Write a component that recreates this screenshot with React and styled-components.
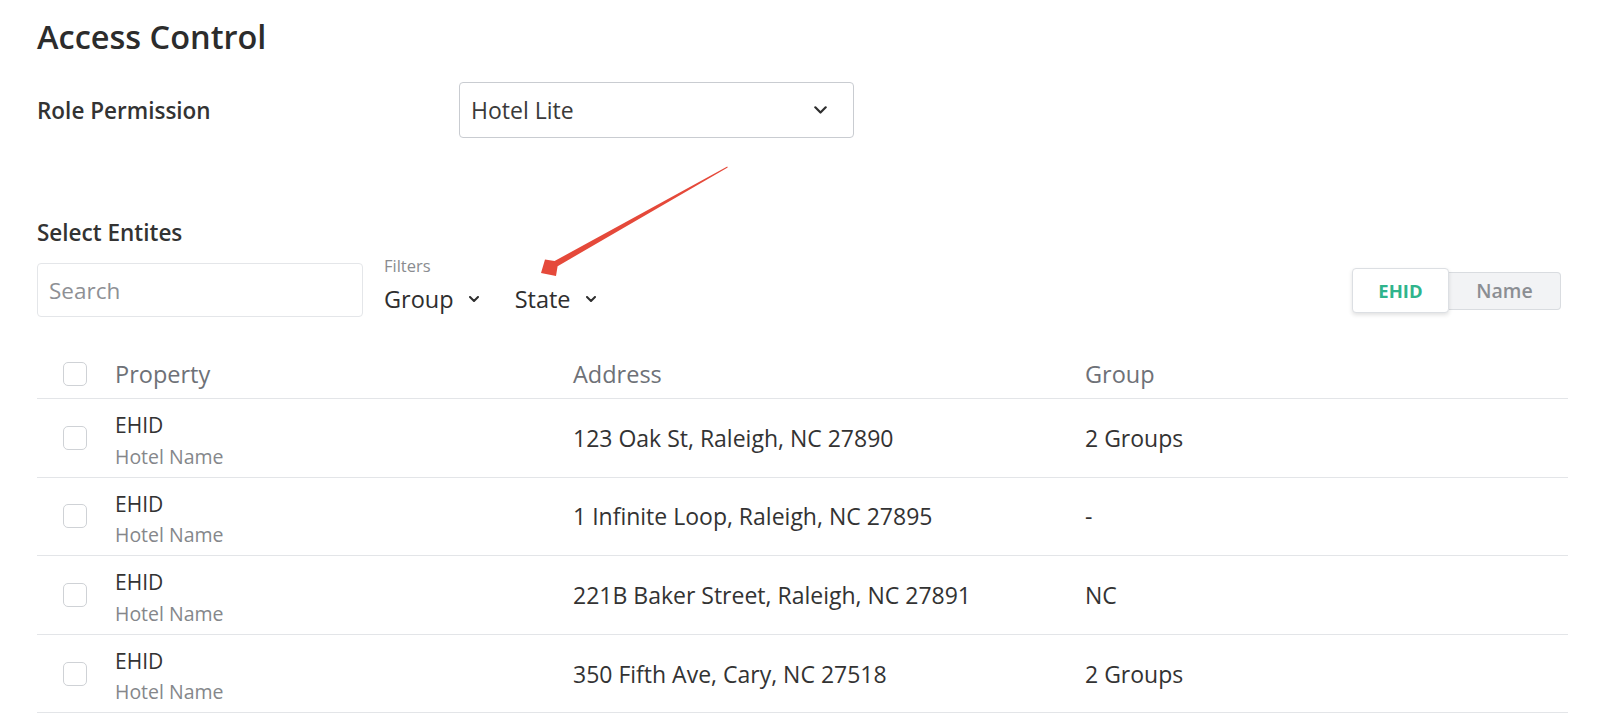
import React from 'react';
import styled, {createGlobalStyle} from 'styled-components';

const GlobalStyle = createGlobalStyle`
    body {
        margin: 0;
        background: #ffffff;
        font-family: "Open Sans", "Noto Sans", sans-serif;
        color: #333333;
    }
`;

const Page = styled.div`
    position: relative;
    padding: 17px 32px 0 37px;
`;

const Title = styled.h1`
    margin: 0;
    font-size: 32.5px;
    line-height: 40px;
    font-weight: 600;
    color: #2c2c2c;
`;

const RoleRow = styled.div`
    display: flex;
    align-items: center;
    margin-top: 25px;
`;

const FieldLabel = styled.div`
    width: 422px;
    font-size: 22.5px;
    font-weight: 600;
    color: #333333;
`;

const SelectBox = styled.div`
    box-sizing: border-box;
    width: 395px;
    height: 56px;
    display: flex;
    align-items: center;
    justify-content: space-between;
    padding: 0 26px 0 11px;
    border: 1px solid #c9ccd1;
    border-radius: 4px;
    font-size: 23px;
    color: #3a3a3a;
`;

const SectionLabel = styled.div`
    margin-top: 81px;
    font-size: 22.5px;
    line-height: 28px;
    font-weight: 600;
    color: #333333;
`;

const Toolbar = styled.div`
    display: flex;
    align-items: flex-start;
    margin-top: 9px;
`;

const SearchInput = styled.input`
    box-sizing: border-box;
    width: 326px;
    height: 54px;
    margin-top: 7px;
    padding: 0 11px;
    border: 1px solid #e4e6e9;
    border-radius: 4px;
    font-family: inherit;
    font-size: 22.5px;
    color: #333333;
    outline: none;

    &::placeholder {
        color: #8e9095;
    }
`;

const FilterGroup = styled.div`
    display: flex;
    flex-direction: column;
    margin-left: 21px;
`;

const FilterCaption = styled.div`
    font-size: 16.5px;
    line-height: 20px;
    color: #8a8c90;
`;

const FilterList = styled.div`
    display: flex;
    gap: 36px;
    margin-top: 7.5px;
`;

const FilterButton = styled.div`
    display: flex;
    align-items: center;
    gap: 15px;
    font-size: 23.5px;
    line-height: 30px;
    font-weight: 500;
    color: #2e2e2e;
`;

const Segmented = styled.div`
    display: flex;
    align-items: center;
    margin: 12px 7px 0 auto;
`;

const Segment = styled.div`
    box-sizing: border-box;
    display: flex;
    align-items: center;
    justify-content: center;
    width: ${p => p.$active ? '97px' : '112px'};
    height: ${p => p.$active ? '45px' : '38px'};
    font-size: ${p => p.$active ? '18.5px' : '19.5px'};
    font-weight: ${p => p.$active ? 700 : 600};
    color: ${p => p.$active ? '#2fb48c' : '#8b8e93'};
    background: ${p => p.$active ? '#ffffff' : '#f2f3f5'};
    border: 1px solid ${p => p.$active ? '#dcdfe3' : '#d9dce0'};
    border-radius: 4px;
    box-shadow: ${p => p.$active ? '0 2px 4px rgba(0, 0, 0, 0.12)' : 'none'};
    ${p => p.$active ? 'position: relative; z-index: 1;' : 'border-left: none; border-radius: 0 4px 4px 0;'}
`;

const Table = styled.div`
    margin-top: 32px;
`;

const Row = styled.div`
    display: grid;
    grid-template-columns: 78px 458px 512px 1fr;
    align-items: center;
    height: ${p => p.$head ? '49px' : '77.6px'};
    border-bottom: 1px solid #e3e5e8;
`;

const CheckCell = styled.div`
    display: flex;
    padding-left: 26px;
`;

const Checkbox = styled.span`
    box-sizing: border-box;
    width: 24px;
    height: 24px;
    border: 1.5px solid #cfd2d6;
    border-radius: 5px;
    background: #ffffff;
`;

const HeadCell = styled.div`
    font-size: 23.5px;
    font-weight: 500;
    color: #6e7177;
`;

const Cell = styled.div`
    font-size: 23px;
    color: #333333;
`;

const PropertyCell = styled.div`
    display: flex;
    flex-direction: column;
    gap: 5.5px;
    padding-top: 6px;
`;

const PropertyId = styled.div`
    font-size: 21px;
    line-height: 26px;
    color: #333333;
`;

const PropertyName = styled.div`
    font-size: 19.5px;
    line-height: 26px;
    color: #85878b;
`;

const Annotation = styled.svg`
    position: absolute;
    left: 0;
    top: 0;
    width: 800px;
    height: 300px;
    pointer-events: none;
`;

const Chevron = ({size = 10, width = 2}) => (
    <svg width={size} height={size * 0.6} viewBox="0 0 10 6" fill="none">
        <path d="M1 1l4 4 4-4" stroke="#2e2e2e" strokeWidth={width * 10 / size} strokeLinecap="round" strokeLinejoin="round" />
    </svg>
);

const properties = [
    {id: 'EHID', name: 'Hotel Name', address: '123 Oak St, Raleigh, NC 27890', group: '2 Groups'},
    {id: 'EHID', name: 'Hotel Name', address: '1 Infinite Loop, Raleigh, NC 27895', group: '-'},
    {id: 'EHID', name: 'Hotel Name', address: '221B Baker Street, Raleigh, NC 27891', group: 'NC'},
    {id: 'EHID', name: 'Hotel Name', address: '350 Fifth Ave, Cary, NC 27518', group: '2 Groups'},
];

const App = () => {
    return <>
        <GlobalStyle />
        <Page>
            <Title>Access Control</Title>
            <RoleRow>
                <FieldLabel>Role Permission</FieldLabel>
                <SelectBox>
                    Hotel Lite
                    <Chevron size={13} width={2.2} />
                </SelectBox>
            </RoleRow>

            <SectionLabel>Select Entites</SectionLabel>
            <Toolbar>
                <SearchInput placeholder="Search" />
                <FilterGroup>
                    <FilterCaption>Filters</FilterCaption>
                    <FilterList>
                        <FilterButton>Group <Chevron size={10} width={2} /></FilterButton>
                        <FilterButton>State <Chevron size={10} width={2} /></FilterButton>
                    </FilterList>
                </FilterGroup>
                <Segmented>
                    <Segment $active>EHID</Segment>
                    <Segment>Name</Segment>
                </Segmented>
            </Toolbar>

            <Table>
                <Row $head>
                    <CheckCell><Checkbox /></CheckCell>
                    <HeadCell>Property</HeadCell>
                    <HeadCell>Address</HeadCell>
                    <HeadCell>Group</HeadCell>
                </Row>
                {properties.map((p, i) => (
                    <Row key={i}>
                        <CheckCell><Checkbox /></CheckCell>
                        <PropertyCell>
                            <PropertyId>{p.id}</PropertyId>
                            <PropertyName>{p.name}</PropertyName>
                        </PropertyCell>
                        <Cell>{p.address}</Cell>
                        <Cell>{p.group}</Cell>
                    </Row>
                ))}
            </Table>

            {/* red callout arrow pointing at the State filter */}
            <Annotation viewBox="0 0 800 300">
                <polygon
                    fill="#e5493a"
                    points="727.3,166.6 727.7,167.4 557.6,266.2 556,276 541,273 545,259.5 554.6,261"
                />
            </Annotation>
        </Page>
    </>
}

export default App;
